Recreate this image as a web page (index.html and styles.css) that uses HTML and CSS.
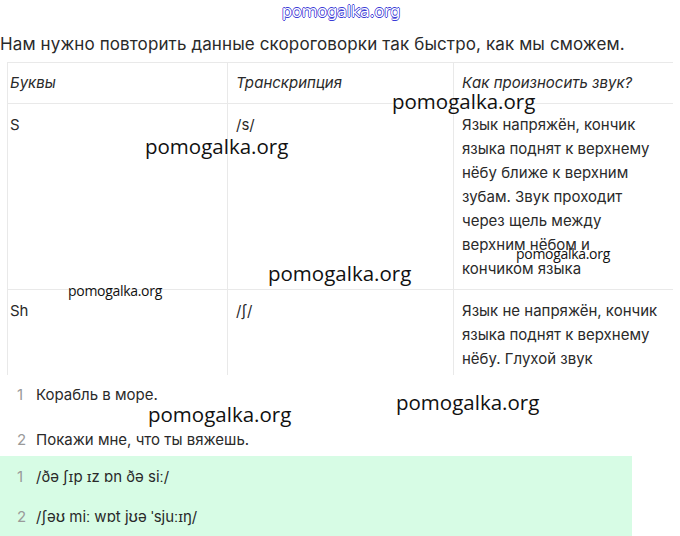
FILE: index.html
```html
<!DOCTYPE html>
<html lang="ru">
<head>
<meta charset="utf-8">
<link rel="stylesheet" href="styles.css">
</head>
<body>
<div class="page">
  <div class="wm-top">pomogalka.org</div>
  <p class="intro">Нам нужно повторить данные скороговорки так быстро, как мы сможем.</p>
  <div class="table-wrap">
    <table class="sounds">
      <colgroup>
        <col class="w1">
        <col class="w2">
        <col class="w3">
      </colgroup>
      <thead>
        <tr><th class="c1">Буквы</th><th>Транскрипция</th><th>Как произносить звук?</th></tr>
      </thead>
      <tbody>
        <tr><td class="c1">S</td><td>/s/</td><td>Язык напряжён, кончик языка поднят к верхнему нёбу ближе к верхним зубам. Звук проходит через щель между верхним нёбом и кончиком языка</td></tr>
        <tr><td class="c1">Sh</td><td>/ʃ/</td><td>Язык не напряжён, кончик языка поднят к верхнему нёбу. Глухой звук</td></tr>
      </tbody>
    </table>
  </div>
  <ol class="lines plain">
    <li><span class="num">1</span><span>Корабль в море.</span></li>
    <li><span class="num">2</span><span>Покажи мне, что ты вяжешь.</span></li>
  </ol>
  <ol class="lines answer">
    <li><span class="num">1</span><span>/ðə ʃɪp ɪz ɒn ðə siː/</span></li>
    <li><span class="num">2</span><span>/ʃəʊ miː wɒt jʊə ˈsjuːɪŋ/</span></li>
  </ol>

  <div class="wm wm-a">pomogalka.org</div>
  <div class="wm wm-b">pomogalka.org</div>
  <div class="wm wm-c">pomogalka.org</div>
  <div class="wm wm-d">pomogalka.org</div>
  <div class="wm wm-e">pomogalka.org</div>
  <div class="wm wm-small wm-f">pomogalka.org</div>
  <div class="wm wm-small wm-g">pomogalka.org</div>
</div>
</body>
</html>
```

FILE: styles.css
```css
html, body {
  margin: 0;
  padding: 0;
  background: #fff;
}
.page {
  position: relative;
  width: 680px;
  height: 536px;
  overflow: hidden;
  font-family: Inter, "Noto Sans", sans-serif;
  color: #2a2a2a;
}
.wm-top {
  height: 24px;
  text-align: center;
  font-family: "DejaVu Sans", sans-serif;
  font-size: 16.5px;
  line-height: 24px;
  color: #fff;
  letter-spacing: -0.4px;
  padding-left: 2px;
  text-shadow: 0.7px 0 #3b3bd6, -0.7px 0 #3b3bd6, 0 0.7px #3b3bd6, 0 -0.7px #3b3bd6;
}
.intro {
  margin: 8px 0 0 0;
  font-size: 17px;
  letter-spacing: 0.12px;
  line-height: 24px;
  height: 30px;
}
.table-wrap {
  margin-left: 7px;
  width: 666px;
  height: 313px;
  overflow: hidden;
}
.sounds {
  border-collapse: collapse;
  width: 666px;
  table-layout: fixed;
  font-size: 15px;
  line-height: 24px;
}
.w1 { width: 220px; }
.w2 { width: 226px; }
.w3 { width: 220px; }
.sounds th, .sounds td {
  border: 1px solid #e9e9e9;
  text-align: left;
  vertical-align: top;
  padding: 9px 8px 8px 8px;
}
.sounds th {
  font-weight: 400;
  font-style: italic;
  padding-top: 8px;
  height: 23px;
}
.sounds .c1 { padding-left: 2px; }
.lines {
  list-style: none;
  margin: 0;
  padding: 0;
  font-size: 15px;
}
.lines li {
  display: flex;
  align-items: center;
}
.lines .num {
  width: 36px;
  padding-left: 17px;
  box-sizing: border-box;
  color: #9a9a9a;
}
.plain {
  padding-top: 8px;
}
.plain li { height: 22px; }
.plain li + li { margin-top: 23px; }
.answer {
  margin-top: 6px;
  width: 632px;
  height: 80px;
  background: #d7fce5;
}
.answer li { height: 40px; }
.wm {
  position: absolute;
  font-family: "Open Sans", sans-serif;
  font-size: 20.5px;
  line-height: 24px;
  color: #111;
  white-space: nowrap;
}
.wm-small {
  font-family: "Liberation Sans Narrow", "Open Sans", sans-serif;
  font-size: 14px;
  line-height: 16px;
  letter-spacing: -0.3px;
}
.wm-a { left: 392px; top: 89px; }
.wm-b { left: 145px; top: 134px; }
.wm-c { left: 268px; top: 261px; }
.wm-d { left: 148px; top: 402px; }
.wm-e { left: 396px; top: 390px; }
.wm-f { left: 68px; top: 283px; }
.wm-g { left: 516px; top: 246px; }
```
